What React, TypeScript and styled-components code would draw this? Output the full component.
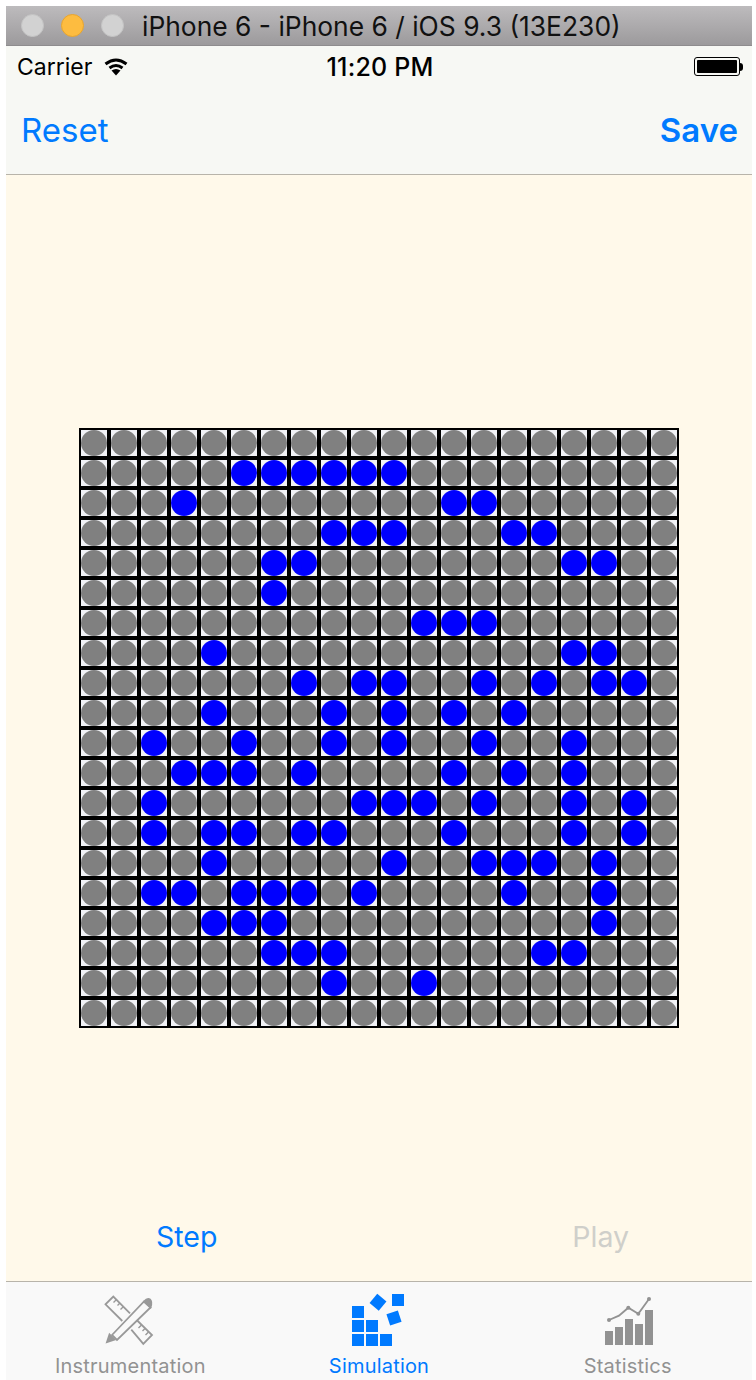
import styled, { createGlobalStyle } from "styled-components"

const GlobalStyle = createGlobalStyle`
  html, body {
    margin: 0;
    padding: 0;
    background: #ffffff;
  }
`

const blueCells: number[][] = [
  [],
  [5, 6, 7, 8, 9, 10],
  [3, 12, 13],
  [8, 9, 10, 14, 15],
  [6, 7, 16, 17],
  [6],
  [11, 12, 13],
  [4, 16, 17],
  [7, 9, 10, 13, 15, 17, 18],
  [4, 8, 10, 12, 14],
  [2, 5, 8, 10, 13, 16],
  [3, 4, 5, 7, 12, 14, 16],
  [2, 9, 10, 11, 13, 16, 18],
  [2, 4, 5, 7, 8, 12, 16, 18],
  [4, 10, 13, 14, 15, 17],
  [2, 3, 5, 6, 7, 9, 14, 17],
  [4, 5, 6, 17],
  [6, 7, 8, 15, 16],
  [8, 11],
  [],
]

const Window = styled.div`
  width: 746px;
  height: 1380px;
  margin-left: 6px;
  padding-top: 6px;
  box-sizing: border-box;
  display: flex;
  flex-direction: column;
  overflow: hidden;
  font-family: "Inter", "Liberation Sans", sans-serif;
`

const TitleBar = styled.div`
  height: 40px;
  flex: none;
  display: flex;
  align-items: center;
  padding-left: 15px;
  background: linear-gradient(to bottom, #bdbbbd, #9c9a9c);
  border-bottom: 1px solid #8e8c8e;
  box-sizing: border-box;
`

const Light = styled.span<{ $color: string; $edge: string }>`
  width: 23px;
  height: 23px;
  border-radius: 50%;
  margin-right: 17px;
  background: ${(p) => p.$color};
  border: 1px solid ${(p) => p.$edge};
  box-sizing: border-box;
`

const TitleText = styled.span`
  margin-left: 1px;
  font-size: 26.4px;
  color: #111111;
  white-space: nowrap;
`

const NavArea = styled.div`
  height: 129px;
  flex: none;
  background: #f7f8f4;
  border-bottom: 1px solid #b8b4aa;
  box-sizing: border-box;
  display: flex;
  flex-direction: column;
`

const StatusBar = styled.div`
  height: 41px;
  display: grid;
  grid-template-columns: 1fr auto 1fr;
  align-items: center;
  padding: 0 9px 0 11px;
  color: #000000;
`

const Carrier = styled.div`
  display: flex;
  align-items: center;
  gap: 12px;
  font-size: 23px;
`

const Clock = styled.div`
  font-size: 25px;
  font-weight: 500;
  letter-spacing: 0.2px;
`

const BatteryWrap = styled.div`
  display: flex;
  justify-content: flex-end;
  align-items: center;
`

const Battery = styled.div`
  width: 46px;
  height: 19px;
  padding: 2px;
  border: 1px solid #000000;
  border-radius: 3px;
  box-sizing: border-box;
  background: #f7f8f4;

  &::before {
    content: "";
    display: block;
    height: 100%;
    background: #000000;
    border-radius: 1px;
  }
`

const BatteryTip = styled.div`
  width: 3px;
  height: 8px;
  background: #000000;
  border-radius: 0 3px 3px 0;
`

const NavRow = styled.div`
  flex: 1;
  display: flex;
  align-items: center;
  justify-content: space-between;
  padding: 0 14px 2px 15px;
  font-size: 33px;
  color: #007aff;
`

const SaveLabel = styled.span`
  font-weight: 600;
`

const Content = styled.div`
  flex: 1;
  background: #fff9ea;
  display: flex;
  flex-direction: column;
  align-items: center;
`

const GridArea = styled.div`
  flex: 1;
  padding-top: 253px;
  box-sizing: border-box;
  margin-left: -1px;
`

const Board = styled.div`
  width: 600px;
  height: 600px;
  display: grid;
  grid-template-columns: repeat(20, 30px);
  grid-template-rows: repeat(20, 30px);
`

const Cell = styled.div`
  width: 30px;
  height: 30px;
  border: 2px solid #000000;
  background: #f1f2f6;
  box-sizing: border-box;
  display: flex;
  align-items: center;
  justify-content: center;
`

const Dot = styled.div<{ $on: boolean }>`
  width: 26px;
  height: 26px;
  border-radius: 50%;
  background: ${(p) => (p.$on ? "#0000ff" : "#808080")};
`

const Controls = styled.div`
  height: 94px;
  width: 100%;
  flex: none;
  box-sizing: border-box;
  display: flex;
  justify-content: space-between;
  padding: 30px 123px 0 150px;
  font-size: 28.5px;
`

const ControlButton = styled.span<{ $disabled?: boolean }>`
  color: ${(p) => (p.$disabled ? "#cfcfca" : "#007aff")};
  line-height: 40px;
`

const TabBar = styled.div`
  height: 99px;
  flex: none;
  background: #f9f9f9;
  border-top: 1px solid #b8b4aa;
  box-sizing: border-box;
  display: grid;
  grid-template-columns: repeat(3, 1fr);
`

const Tab = styled.div<{ $active?: boolean }>`
  display: flex;
  flex-direction: column;
  align-items: center;
  color: ${(p) => (p.$active ? "#007aff" : "#929292")};
  padding-top: 11px;
`

const TabIcon = styled.svg`
  width: 56px;
  height: 56px;
  display: block;
  flex: none;
`

const TabLabel = styled.span`
  font-size: 20px;
  line-height: 24px;
  margin-top: 5px;
  letter-spacing: 0.2px;
`

function WifiIcon() {
  return (
    <svg width="24" height="18" viewBox="0 0 24 18" fill="none" stroke="#000" strokeWidth="3">
      <path d="M1.5 6 Q12 -2 22.5 6" />
      <path d="M5.5 10 Q12 5 18.5 10" />
      <path d="M7.5 12.5 L12 17.5 L16.5 12.5 Q12 9.5 7.5 12.5 Z" fill="#000" stroke="none" />
    </svg>
  )
}

function InstrumentationIcon() {
  return (
    <TabIcon viewBox="0 0 56 56" fill="none" stroke="#999999" strokeWidth="1.8">
      <path d="M20.3 28 L3.5 11.3 L11.3 3.5 L28 20.3" />
      <path d="M29.3 36.7 L41.3 50.8 L50 42 L34.7 27" />
      <path d="M14.5 6.5 L11.5 9.5 M18 10 L15.5 12.5 M21.5 13.5 L18.5 16.5 M39.5 32 L36.5 35 M43 35.5 L40.5 38 M46.5 39 L43.5 42" strokeWidth="1.4" />
      <path d="M10 42 L42 8.5 L48.5 14.5 L15 47 Z" />
      <path d="M5 49 L7.5 41.5 L12.5 46.5 Z" fill="#999999" />
      <path d="M42 8.5 Q45.5 4.5 48 6.5 Q50.5 9 48.5 14.5 Z" fill="#999999" />
    </TabIcon>
  )
}

function SimulationIcon() {
  return (
    <TabIcon viewBox="0 0 56 56" fill="#007aff" stroke="none">
      <rect x="1" y="13" width="12" height="12" />
      <rect x="1" y="27" width="12" height="12" />
      <rect x="15" y="27" width="12" height="12" />
      <rect x="1" y="41" width="12" height="12" />
      <rect x="15" y="41" width="12" height="12" />
      <rect x="29" y="41" width="12" height="12" />
      <rect x="41" y="1" width="12" height="12" />
      <rect x="21" y="3.3" width="12" height="12" transform="rotate(40 27 9.3)" />
      <rect x="37" y="19" width="12" height="12" transform="rotate(-18 43 25)" />
    </TabIcon>
  )
}

function StatisticsIcon() {
  return (
    <TabIcon viewBox="0 0 56 56" fill="#929292" stroke="none">
      <rect x="5" y="38" width="8" height="14" />
      <rect x="15" y="34" width="8" height="18" />
      <rect x="25" y="26" width="8" height="26" />
      <rect x="35" y="31" width="8" height="21" />
      <rect x="45" y="17" width="8" height="35" />
      <path d="M9 27 L19 22.7 L28.3 14.7 L38.3 20.7 L49 6" fill="none" stroke="#929292" strokeWidth="1.8" />
      <circle cx="9" cy="27" r="2" />
      <circle cx="28.3" cy="14.7" r="2" />
      <circle cx="38.3" cy="20.7" r="2" />
      <circle cx="49" cy="6" r="2" />
    </TabIcon>
  )
}

export default function App() {
  return (
    <>
      <GlobalStyle />
      <Window>
        <TitleBar>
          <Light $color="#d2d2d2" $edge="#c4c4c4" />
          <Light $color="#fdbc40" $edge="#e8a52e" />
          <Light $color="#d2d2d2" $edge="#c4c4c4" />
          <TitleText>iPhone 6 - iPhone 6 / iOS 9.3 (13E230)</TitleText>
        </TitleBar>
        <NavArea>
          <StatusBar>
            <Carrier>
              Carrier
              <WifiIcon />
            </Carrier>
            <Clock>11:20 PM</Clock>
            <BatteryWrap>
              <Battery />
              <BatteryTip />
            </BatteryWrap>
          </StatusBar>
          <NavRow>
            <span>Reset</span>
            <SaveLabel>Save</SaveLabel>
          </NavRow>
        </NavArea>
        <Content>
          <GridArea>
            <Board>
              {blueCells.map((row, r) =>
                Array.from({ length: 20 }, (_, c) => (
                  <Cell key={`${r}-${c}`}>
                    <Dot $on={row.includes(c)} />
                  </Cell>
                ))
              )}
            </Board>
          </GridArea>
          <Controls>
            <ControlButton>Step</ControlButton>
            <ControlButton $disabled>Play</ControlButton>
          </Controls>
        </Content>
        <TabBar>
          <Tab>
            <InstrumentationIcon />
            <TabLabel>Instrumentation</TabLabel>
          </Tab>
          <Tab $active>
            <SimulationIcon />
            <TabLabel>Simulation</TabLabel>
          </Tab>
          <Tab>
            <StatisticsIcon />
            <TabLabel>Statistics</TabLabel>
          </Tab>
        </TabBar>
      </Window>
    </>
  )
}
